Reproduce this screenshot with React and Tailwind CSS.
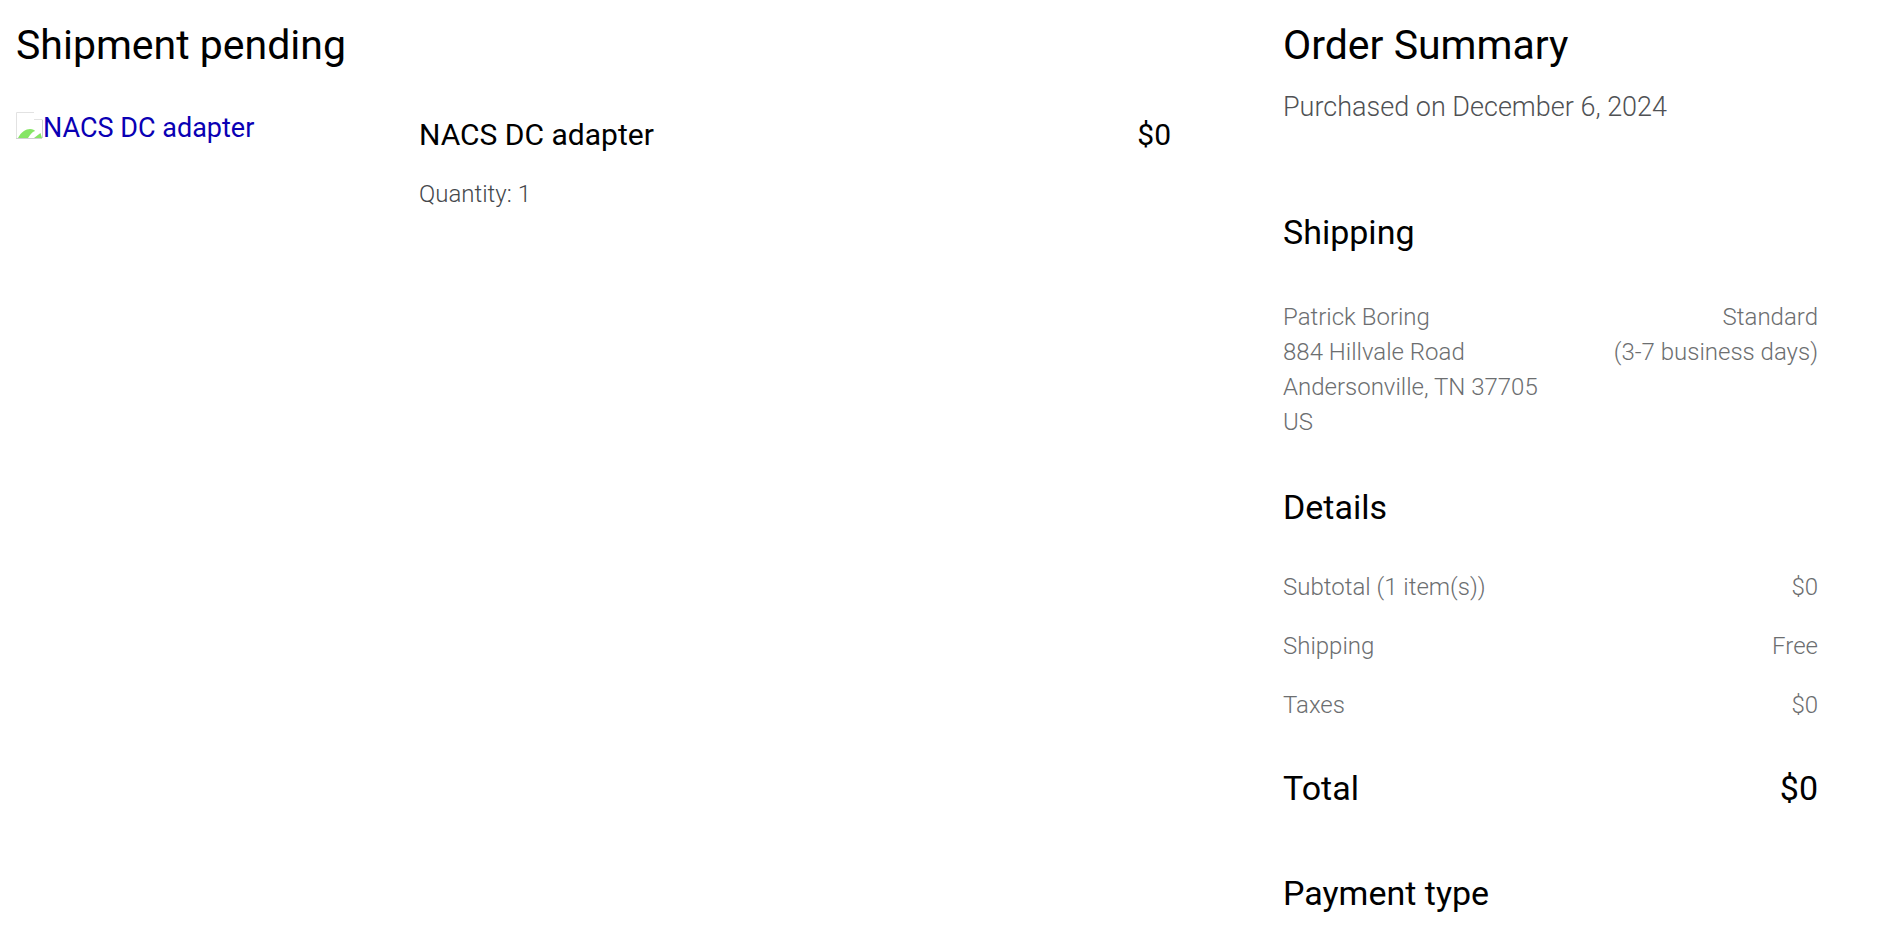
import React from "react";

const shipTo = ["Patrick Boring", "884 Hillvale Road", "Andersonville, TN 37705", "US"];

const details = [
  { label: "Subtotal (1 item(s))", value: "$0" },
  { label: "Shipping", value: "Free" },
  { label: "Taxes", value: "$0" },
];

function MissingImageIcon() {
  return (
    <svg className="w-[27px] h-[27px] shrink-0" viewBox="0 0 27 27" fill="none" aria-hidden="true">
      <path d="M0.5 26V0.5H18" stroke="#e2e2e2" />
      <path d="M18 7.5H26.5" stroke="#e2e2e2" />
      <path d="M26.5 8V26" stroke="#cfcfcf" />
      <path d="M2 26C5 20 10 17 14 17C17 17 18.500 18 19 19C16 20 14 23 12 26Z" fill="#86e565" />
      <path d="M18 26L24.500 21L26 26Z" fill="#86e565" />
      <path d="M0 26.5H26" stroke="#cfcfcf" />
    </svg>
  );
}

function SectionTitle({ children }) {
  return <h2 className="text-[34px] leading-11">{children}</h2>;
}

function ShipmentItem({ name, price, quantity }) {
  return (
    <div className="mt-[41px] grid grid-cols-[403fr_752fr]">
      <a href="#product" className="flex items-start text-[27px] leading-9 text-[#0a00b4]">
        <span className="pt-[2px]">
          <MissingImageIcon />
        </span>
        {name}
      </a>
      <div className="pt-[5px]">
        <div className="flex justify-between text-[30px] leading-10">
          <h2>{name}</h2>
          <span>{price}</span>
        </div>
        <p className="mt-[22px] text-2xl font-light leading-[35px] text-[#45484c]">Quantity: {quantity}</p>
      </div>
    </div>
  );
}

function OrderSummary() {
  return (
    <aside>
      <h1 className="text-[41px] leading-12">Order Summary</h1>
      <p className="mt-5 text-[27px] font-light leading-9 text-[#4f5154]">Purchased on December 6, 2024</p>

      <div className="mt-[85px]">
        <SectionTitle>Shipping</SectionTitle>
      </div>
      <div className="mt-[46px] flex justify-between text-2xl font-light leading-[35px] text-[#6c6e70]">
        <address className="not-italic">
          {shipTo.map((line) => (
            <div key={line}>{line}</div>
          ))}
        </address>
        <div className="text-right">
          <div>Standard</div>
          <div>(3-7 business days)</div>
        </div>
      </div>

      <div className="mt-[45px]">
        <SectionTitle>Details</SectionTitle>
      </div>
      <dl className="mt-[41px] flex flex-col gap-6 text-2xl font-light leading-[35px] text-[#6c6e70]">
        {details.map((row) => (
          <div key={row.label} className="flex justify-between">
            <dt>{row.label}</dt>
            <dd>{row.value}</dd>
          </div>
        ))}
      </dl>

      <div className="mt-[43px] flex justify-between text-[34px] leading-11">
        <h2>Total</h2>
        <span>$0</span>
      </div>

      <div className="mt-[61px]">
        <SectionTitle>Payment type</SectionTitle>
      </div>
    </aside>
  );
}

export default function App() {
  return (
    <main className="grid grid-cols-[1155fr_535fr] gap-28 bg-white pl-4 pr-[82px] pt-[21px] font-['Roboto',sans-serif] text-black">
      <section>
        <h1 className="text-[41px] leading-12">Shipment pending</h1>
        <ShipmentItem name="NACS DC adapter" price="$0" quantity={1} />
      </section>
      <OrderSummary />
    </main>
  );
}
